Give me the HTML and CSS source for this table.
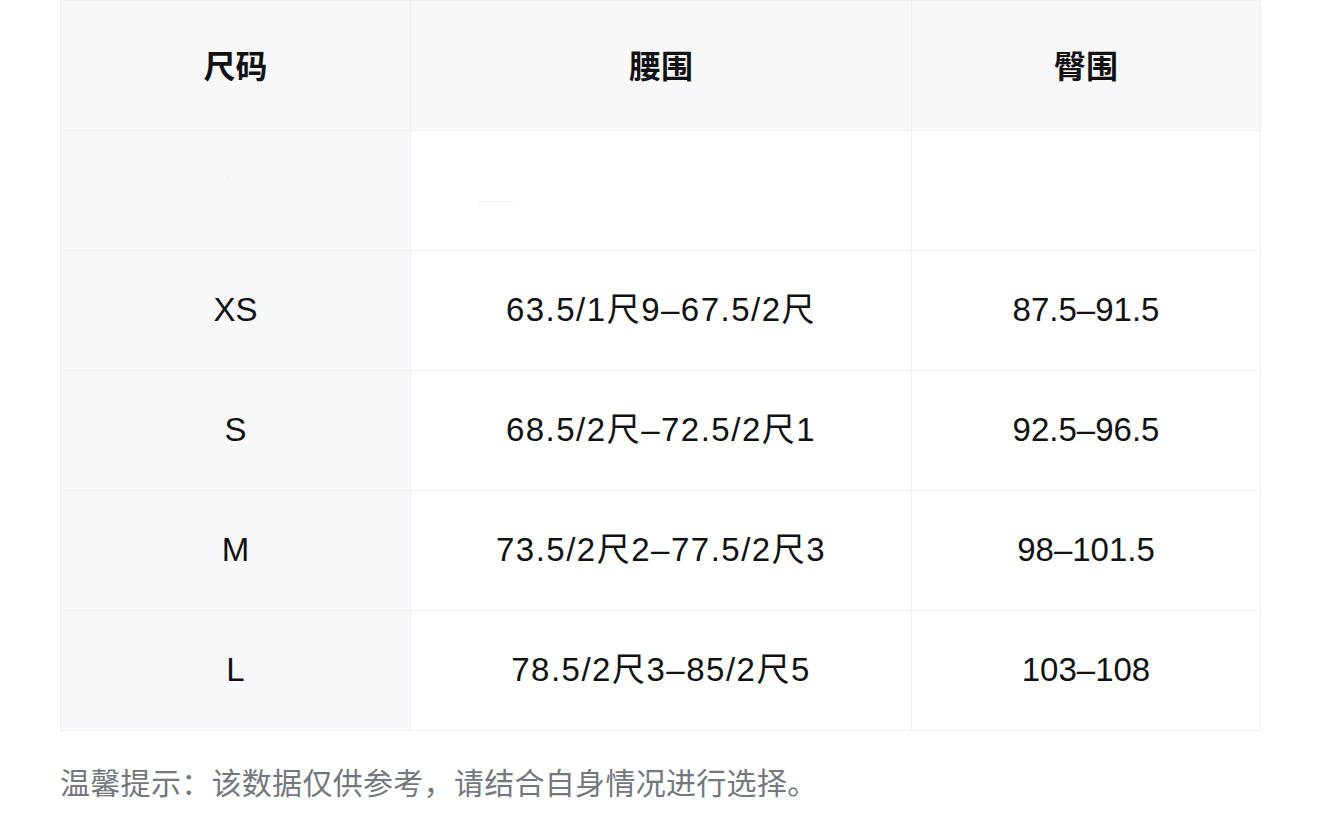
FILE: index.html
```html
<!DOCTYPE html>
<html lang="zh-CN">
<head>
<meta charset="utf-8">
<title>尺码表</title>
<link rel="stylesheet" href="styles.css">
</head>
<body>
<div class="page">
  <table class="size-table">
    <colgroup>
      <col class="c1">
      <col class="c2">
      <col class="c3">
    </colgroup>
    <thead>
      <tr class="head-row">
        <th>尺码</th>
        <th>腰围</th>
        <th>臀围</th>
      </tr>
    </thead>
    <tbody>
      <tr class="blank-row">
        <td class="first"><span class="dot"></span></td>
        <td><span class="faint-line"></span></td>
        <td></td>
      </tr>
      <tr>
        <td class="first">XS</td>
        <td class="waist">63.5/1尺9–67.5/2尺</td>
        <td>87.5–91.5</td>
      </tr>
      <tr>
        <td class="first">S</td>
        <td class="waist">68.5/2尺–72.5/2尺1</td>
        <td>92.5–96.5</td>
      </tr>
      <tr>
        <td class="first">M</td>
        <td class="waist">73.5/2尺2–77.5/2尺3</td>
        <td>98–101.5</td>
      </tr>
      <tr>
        <td class="first">L</td>
        <td class="waist">78.5/2尺3–85/2尺5</td>
        <td>103–108</td>
      </tr>
    </tbody>
  </table>
  <p class="tip">温馨提示：该数据仅供参考，请结合自身情况进行选择。</p>
</div>
</body>
</html>
```

FILE: styles.css
```css
html, body {
  margin: 0;
  padding: 0;
  background: #ffffff;
}

body {
  font-family: "Liberation Sans", "Noto Sans CJK SC", sans-serif;
  color: #111111;
}

.page {
  padding: 0 60px;
}

.size-table {
  width: 1200px;
  table-layout: fixed;
  border-collapse: collapse;
  border: 1px solid #eeeff2;
}

.c1 { width: 350px; }
.c2 { width: 501px; }
.c3 { width: 349px; }

.size-table th,
.size-table td {
  border: 1px solid #eeeff2;
  text-align: center;
  vertical-align: middle;
  padding: 0;
  font-size: 33px;
  line-height: 40px;
  box-sizing: border-box;
}

.size-table th {
  height: 130px;
  padding-bottom: 4px;
  background: #f8f8fa;
  font-weight: bold;
  font-family: "Noto Sans CJK SC", sans-serif;
  font-size: 32px;
}

.size-table td {
  height: 120px;
  padding-bottom: 1px;
  background: #ffffff;
  font-weight: normal;
}

.size-table td.first {
  background: #f8f8fa;
}

.size-table td.waist {
  letter-spacing: 1.5px;
}

.blank-row td {
  position: relative;
}

.dot {
  position: absolute;
  left: 167px;
  top: 46px;
  width: 1px;
  height: 1px;
  background: #dcdde0;
}

.faint-line {
  position: absolute;
  left: 66px;
  top: 70px;
  width: 36px;
  height: 1px;
  background: #ececee;
}

.tip {
  margin: 30px 0 0 0;
  font-family: "Noto Sans CJK SC", sans-serif;
  font-size: 30px;
  line-height: 40px;
  letter-spacing: 0.3px;
  color: #74777e;
}
```
